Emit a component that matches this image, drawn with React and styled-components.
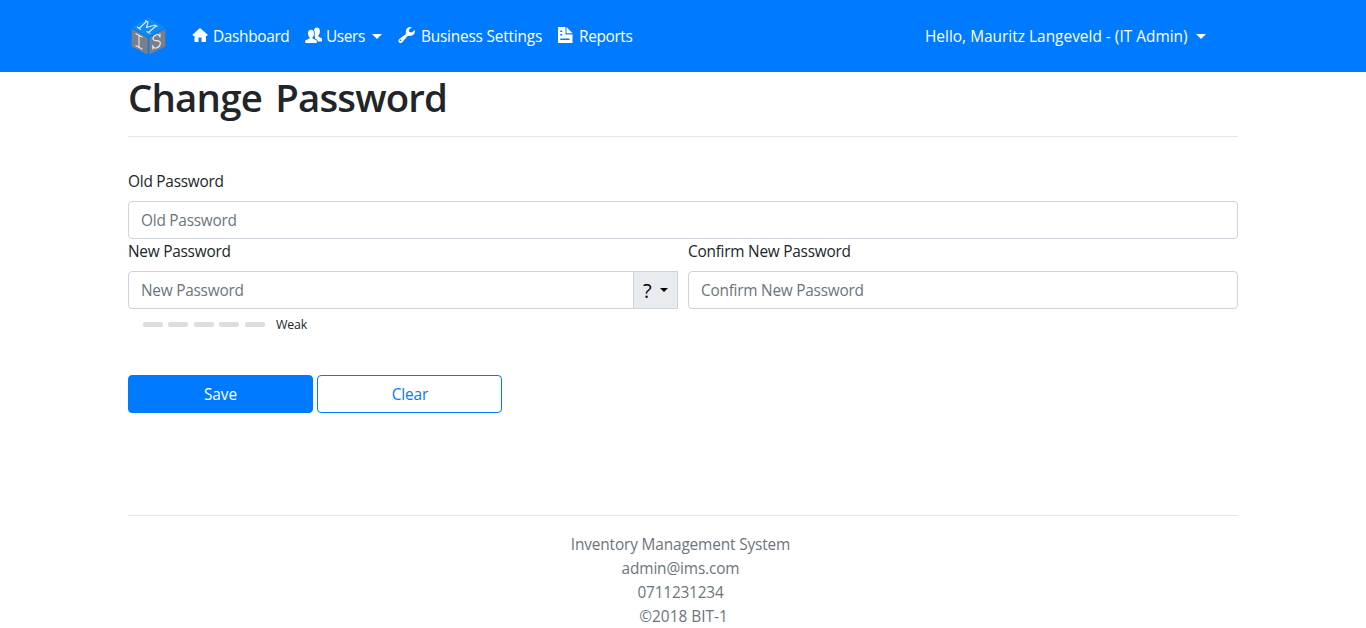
import React from "react";
import styled, { createGlobalStyle } from "styled-components";

const GlobalStyle = createGlobalStyle`
  *, *::before, *::after { box-sizing: border-box; }
  html, body { margin: 0; background: #fff; }
  body {
    font-family: "Open Sans", "Noto Sans", sans-serif;
    font-size: 15.4px;
    line-height: 24px;
    color: #212529;
    overflow: hidden;
  }
`;

const Container = styled.div`
  width: 1110px;
  margin: 0 auto;
`;

const Navbar = styled.nav`
  height: 72px;
  background: #007bff;
  color: #fff;
`;

const NavInner = styled(Container)`
  height: 72px;
  display: flex;
  align-items: center;
`;

const Brand = styled.a`
  display: flex;
  width: 56px;
  svg { display: block; }
`;

const NavLink = styled.a`
  display: flex;
  align-items: center;
  width: ${(p) => p.$width}px;
  padding: 0 8px;
  margin-left: ${(p) => (p.$end ? "auto" : 0)};
  margin-right: ${(p) => (p.$end ? "24px" : 0)};
  color: #fff;
  white-space: nowrap;
  svg { display: block; flex: none; margin: 0 ${(p) => p.$gap ?? 5}px 2px 0; }
`;

const Text = styled.span`
  letter-spacing: ${(p) => p.$track || 0}px;
  margin-left: ${(p) => p.$shift || 0}px;
`;

const NavText = styled(Text)`
  padding-top: 2px;
`;

const Caret = styled.span`
  flex: none;
  margin-left: auto;
  border: 5px solid transparent;
  border-top-color: currentColor;
  border-bottom: 0;
`;

const Title = styled.h1`
  margin: 0;
  font-size: 38.4px;
  line-height: 48px;
  font-weight: 600;
  padding-top: 1px;
  height: 48px;
  white-space: nowrap;
  letter-spacing: -0.8px;
  word-spacing: 4px;
`;

const Rule = styled.hr`
  height: 1px;
  margin: ${(p) => p.$top}px 0 ${(p) => p.$bottom}px;
  border: 0;
  background: #e5e5e5;
`;

const FieldRow = styled.div`
  display: flex;
  gap: 10px;
`;

const Field = styled.div`
  flex: 1;
  min-width: 0;
`;

const Label = styled.label`
  display: block;
  height: 32px;
  padding-top: 1px;
  letter-spacing: -0.24px;
`;

const InputGroup = styled.div`
  display: flex;
`;

const Input = styled.input`
  flex: 1;
  min-width: 0;
  width: 100%;
  height: 38px;
  padding: 6px 12px;
  display: block;
  border: 1px solid #ced4da;
  border-radius: ${(p) => (p.$grouped ? "4px 0 0 4px" : "4px")};
  font: inherit;
  letter-spacing: -0.24px;
  outline: 0;
  &::placeholder { color: #6c757d; opacity: 1; }
`;

const HelpButton = styled.button`
  display: flex;
  align-items: center;
  width: 45px;
  height: 38px;
  margin-left: -1px;
  padding: 2px 9px 0;
  border: 1px solid #ced4da;
  background: #e9ecef;
  color: #000;
  font: inherit;
  font-size: 20px;
`;

const HelpCaret = styled(Caret)`
  border-width: 4.5px 4.5px 0;
  margin-bottom: 3px;
`;

const Meter = styled.div`
  display: flex;
  align-items: center;
  height: 30px;
  padding-left: 15px;
  gap: 5.4px;
  font-size: 12.4px;
`;

const MeterBar = styled.span`
  width: 20px;
  height: 5px;
  border-radius: 2px;
  background: #ddd;
`;

const MeterLabel = styled.span`
  margin-left: 6px;
  padding-top: 2px;
  letter-spacing: -0.2px;
`;

const Actions = styled.div`
  display: flex;
  gap: 4px;
  margin-top: 36px;
`;

const Button = styled.button`
  width: 185px;
  height: 38px;
  padding: 2px 0 0 ${(p) => (p.$outline ? 1 : 0)}px;
  border: 1px solid #007bff;
  border-radius: 4px;
  background: ${(p) => (p.$outline ? "transparent" : "#007bff")};
  color: ${(p) => (p.$outline ? "#007bff" : "#fff")};
  font: inherit;
  letter-spacing: -0.1px;
`;

const Footer = styled.footer`
  display: flex;
  flex-direction: column;
  align-items: center;
  padding-right: 5px;
  color: #6c757d;
`;

const Logo = () => (
  <svg width="40" height="42" viewBox="0 0 40 42" fill="none">
    <path d="M20.500 2.500 37 12.500 20.500 22 4 12.500Z" fill="#0f8af0" />
    <path d="M3.700 13.800 19.700 23V39.500L3.700 31.500Z" fill="#7b7f88" />
    <path d="M37.300 13.800 21.300 23V39.500L37.300 31.500Z" fill="#7b7f88" />
    <g stroke="#e4ebf2" strokeWidth="1.100">
      <path d="M9 12 13 14.500M11 13.500 18.500 6.500M17 5.500 20 7 18.500 12.500 27 10 29.500 11.500M28 11 20.500 17.500M18.500 16.500 22.500 18.500" />
      <path d="M7.500 18.500 14.500 22.300M11 20.500V32.500M7.500 30.500 14.500 34.300" />
      <path d="M32 22.500V18.500M31.700 21.500C30.500 17.500 25 20.500 25 24 25.500 27.500 32 23.500 32.300 28 32.500 32 27 35 25 31.500M24.800 34.500V30" />
    </g>
  </svg>
);

const HomeIcon = () => (
  <svg width="16" height="16" viewBox="0 0 16 16" fill="#fff">
    <path d="M8 1 0.500 7.800 1.200 9H2.500V15H6.500V10.500H9.500V15H14V9H15L15.700 7.800Z" />
  </svg>
);

const UsersIcon = () => (
  <svg width="17" height="17" viewBox="0 0 17 17" fill="#fff">
    <path d="M11.800.500C13.800.500 15 2 14.900 4.300 14.900 6.200 14.200 7.700 13.300 8.500V9.600L17 11.500V14.500H10V9.500C8.500 8 8.700 5 8.900 3.500 9.200 1.600 10.200.500 11.800.500Z" />
    <path stroke="#007bff" strokeWidth="1.600" paintOrder="stroke" d="M6 2.700C8.100 2.700 9.200 4.300 9 6.700 8.900 8.400 8.300 9.500 7.500 10.200V11.400L11.800 13.500V16H.200V13.500L4.500 11.400V10.200C3.500 9.300 3 8 3 6.500 2.900 4.200 4 2.700 6 2.700Z" />
  </svg>
);

const WrenchIcon = () => (
  <svg width="18" height="18" viewBox="0 0 18 18" fill="#fff">
    <path fillRule="evenodd" d="M13.800 1.200C10.500.200 7.300 2.700 7.900 6.300L7.700 8.200 1.300 13.100C-.400 14.500.300 16.700 2.200 17 3.200 17.100 4 16.600 4.700 15.800L9.600 9.900 12 9.800C15.500 9.800 17.500 7.200 16.800 4L14 6.500 11.300 6 10.900 3.800ZM3.300 14.100A.8.8 0 1 1 1.700 14.400.8.8 0 0 1 3.300 14.100Z" />
  </svg>
);

const ReportIcon = () => (
  <svg width="16" height="18" viewBox="0 0 16 18">
    <path fill="#fff" fillRule="evenodd" d="M0 1H7.500V8.500H14.500V17H0ZM2.200 4.500V6H4.200V4.500ZM2.200 8V9.500H4.200V8ZM2.200 12.500V14H11.500V12.500ZM8.500 1 14.500 7.300H8.500Z" />
  </svg>
);

export default function App() {
  return (
    <>
      <GlobalStyle />
      <Navbar>
        <NavInner>
          <Brand><Logo /></Brand>
          <NavLink $width={113}><HomeIcon /><NavText $track={-0.33}>Dashboard</NavText></NavLink>
          <NavLink $width={93} $gap={4}><UsersIcon /><NavText $track={-0.4}>Users</NavText><Caret /></NavLink>
          <NavLink $width={160}><WrenchIcon /><NavText $track={-0.2}>Business Settings</NavText></NavLink>
          <NavLink $width={90}><ReportIcon /><NavText $track={-0.35}>Reports</NavText></NavLink>
          <NavLink $width={297} $end><NavText $track={0.02}>Hello, Mauritz Langeveld - (IT Admin)</NavText><Caret /></NavLink>
        </NavInner>
      </Navbar>
      <Container as="main">
        <Title>Change Password</Title>
        <Rule $top={16} $bottom={32} />
        <Field>
          <Label>Old Password</Label>
          <Input placeholder="Old Password" />
        </Field>
        <FieldRow>
          <Field>
            <Label>New Password</Label>
            <InputGroup>
              <Input $grouped placeholder="New Password" />
              <HelpButton>?<HelpCaret /></HelpButton>
            </InputGroup>
          </Field>
          <Field>
            <Label>Confirm New Password</Label>
            <Input placeholder="Confirm New Password" />
          </Field>
        </FieldRow>
        <Meter>
          <MeterBar /><MeterBar /><MeterBar /><MeterBar /><MeterBar />
          <MeterLabel>Weak</MeterLabel>
        </Meter>
        <Actions>
          <Button>Save</Button>
          <Button $outline>Clear</Button>
        </Actions>
        <Rule $top={102} $bottom={17} />
        <Footer>
          <Text $track={-0.15}>Inventory Management System</Text>
          <Text $track={-0.15}>admin@ims.com</Text>
          <Text $track={-0.2}>0711231234</Text>
          <Text $shift={6}>©2018 BIT-1</Text>
        </Footer>
      </Container>
    </>
  );
}
